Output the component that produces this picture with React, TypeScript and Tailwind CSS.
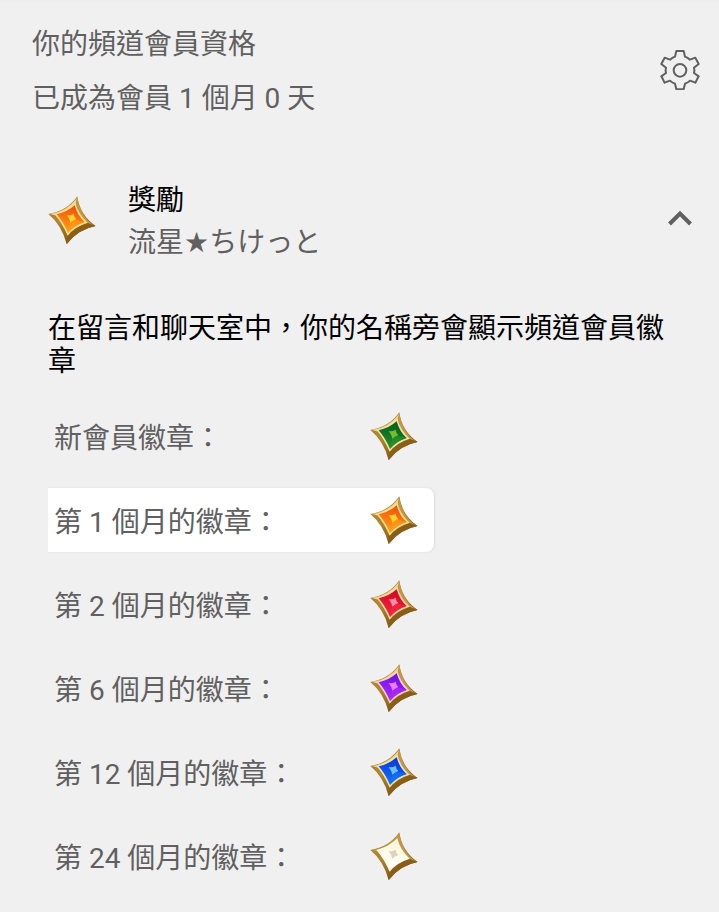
import { useState } from "react";

type Gem = { dark: string; base: string; glow: string; core: string; line: string };

const gems: Record<string, Gem> = {
  green: { dark: "#075f1c", base: "#0d7322", glow: "#2c9428", core: "#7cb832", line: "#f0e2a8" },
  orange: { dark: "#f04f08", base: "#fb7210", glow: "#fda31c", core: "#ffd030", line: "#ffdf8a" },
  red: { dark: "#c80a22", base: "#e3142f", glow: "#f22a44", core: "#ff8fa4", line: "#fbd3a4" },
  purple: { dark: "#6a10e0", base: "#8a1cf2", glow: "#b02cf4", core: "#ee7cf6", line: "#f6cfc0" },
  blue: { dark: "#0a35d0", base: "#0c50ec", glow: "#1478f6", core: "#66c4fb", line: "#f0e2b4" },
  white: { dark: "#fbf3d8", base: "#fffbe9", glow: "#fffef6", core: "#ddd2c2", line: "#fffdf0" },
};

const badges = [
  { label: "新會員徽章：", gem: "green" },
  { label: "第 1 個月的徽章：", gem: "orange", current: true },
  { label: "第 2 個月的徽章：", gem: "red" },
  { label: "第 6 個月的徽章：", gem: "purple" },
  { label: "第 12 個月的徽章：", gem: "blue" },
  { label: "第 24 個月的徽章：", gem: "white" },
];

function StarBadge({ gem }: { gem: string }) {
  const c = gems[gem];
  return (
    <svg viewBox="0 0 144 144" className="h-12 w-12 shrink-0" aria-hidden="true">
      <defs>
        <linearGradient id={`face-${gem}`} x1="0.7" y1="0" x2="0.4" y2="1">
          <stop offset="0" stopColor={c.dark} />
          <stop offset="0.5" stopColor={c.base} />
          <stop offset="1" stopColor={c.glow} />
        </linearGradient>
        <linearGradient id={`rim-${gem}`} x1="0" y1="0" x2="0.6" y2="1">
          <stop offset="0" stopColor="#a98238" />
          <stop offset="0.5" stopColor="#b08530" />
          <stop offset="1" stopColor="#7a5210" />
        </linearGradient>
      </defs>
      {/* gold rim, then its lit and shaded edges */}
      <path d="M1 54Q56 46 88 1Q96 58 143 90Q88 100 56 145Q42 88 1 54Z" fill={`url(#rim-${gem})`} />
      <path d="M6 54Q56 47 87 6L84 22Q58 54 20 58Z" fill={gem === "white" ? "#c99c3c" : "#ecd492"} />
      <path d="M88 6Q97 60 136 88L118 80Q92 62 83 20Z" fill="#c29848" />
      <path d="M120 82L142 90Q88 101 56 144L58 118Q80 92 120 82Z" fill="#8a5e16" />
      {/* gem */}
      <path d="M19 54Q56 45 82 19Q91 56 119 80Q80 92 59 119Q42 80 19 54Z" fill={c.line} />
      <path d="M26 55Q58 48 80 28Q89 60 110 78Q78 88 60 111Q46 78 26 55Z" fill={`url(#face-${gem})`} />
      <path d="M70 67L60 111Q78 88 110 78Z" fill={c.glow} opacity="0.6" />
      <path d="M56 57Q67 59 77 53Q78 63 85 69Q75 72 67 80Q64 67 56 57Z" fill={c.core} />
    </svg>
  );
}

function GearIcon() {
  return (
    <svg viewBox="60 57 120 120" className="h-10 w-10" fill="none" stroke="#606060" strokeWidth="6" strokeLinejoin="round" aria-hidden="true">
      <path d="M109 60H131L135 77Q143 80 150 86L166 80L176 99L162 110Q164 118 162 126L176 136L166 155L150 149Q143 155 135 158L131 175H109L105 158Q97 155 90 149L74 155L64 136L78 126Q76 118 78 110L64 99L74 80L90 86Q97 80 105 77Z" />
      <circle cx="120" cy="118" r="19" />
    </svg>
  );
}

export default function App() {
  const [open, setOpen] = useState(true);

  return (
    <main className="min-h-screen border-t-2 border-[#efeee9] bg-[#f0f0f0] pb-6 font-['Roboto','Noto_Sans_CJK_TC',sans-serif] text-[28px] text-[#606060]">
      <header className="flex items-center justify-between pt-4 pr-[19px] pl-8">
        <div className="leading-[54px]">
          <h1>你的頻道會員資格</h1>
          <p>已成為會員 1 個月 0 天</p>
        </div>
        <button type="button" aria-label="設定" className="mb-1 cursor-pointer">
          <GearIcon />
        </button>
      </header>

      <section className="mt-[50px]">
        <div className="flex items-center pr-[23px] pl-12">
          <StarBadge gem="orange" />
          <div className="ml-8 flex-1 pt-1 leading-[42px]">
            <h2 className="text-black">獎勵</h2>
            <p lang="ja">
              流星<span className="font-['DejaVu_Sans',sans-serif]">★</span>ちけっと
            </p>
          </div>
          <button
            type="button"
            aria-label="收合獎勵"
            aria-expanded={open}
            onClick={() => setOpen(!open)}
            className="cursor-pointer"
          >
            <svg viewBox="0 0 32 32" className="h-8 w-8" fill="none" stroke="#606060" strokeWidth="4" aria-hidden="true">
              <path d={open ? "M5.500 20L16 9.500L26.500 20" : "M5.500 10L16 20.500L26.500 10"} />
            </svg>
          </button>
        </div>

        {open && (
          <div className="mt-12 pr-10 pl-12">
            <h3 className="leading-[33px] text-black">在留言和聊天室中，你的名稱旁會顯示頻道會員徽章</h3>
            <ul className="mt-[26px] flex flex-col gap-5">
              {badges.map((badge) => (
                <li
                  key={badge.gem}
                  className={
                    badge.current
                      ? "flex h-16 max-w-[386px] items-center justify-between rounded-r-lg bg-white pr-4 pl-1.5 shadow-[1px_0_2px_#dcdcdc]"
                      : "flex h-16 max-w-[386px] items-center justify-between pr-4 pl-1.5"
                  }
                >
                  <span className="pt-1.5">{badge.label}</span>
                  <StarBadge gem={badge.gem} />
                </li>
              ))}
            </ul>
          </div>
        )}
      </section>
    </main>
  );
}
